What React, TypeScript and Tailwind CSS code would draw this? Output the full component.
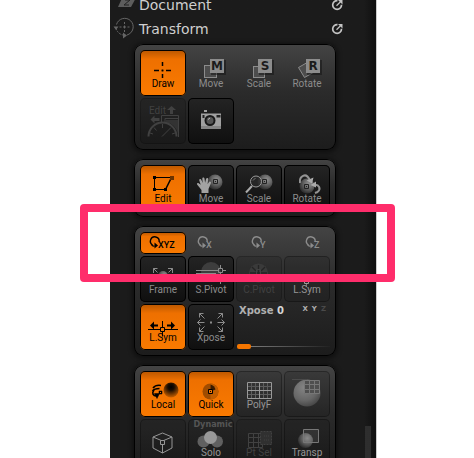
import type { ReactNode } from 'react'
import clsx from 'clsx'

type Variant = 'active' | 'dark' | 'plain' | 'faint' | 'disabled'

const variants: Record<Variant, string> = {
  active:
    'text-black bg-linear-to-b from-[#b85600] via-[#ee7000] via-20% to-[#fa7a00] shadow-[inset_0_0_0_1px_#000]',
  dark: 'text-[#8c8c8c] bg-linear-to-b from-[#242424] to-[#0f0f0f] shadow-[inset_0_0_0_1px_#000]',
  plain: 'text-[#8c8c8c]',
  faint: 'text-[#969696] bg-black/10 shadow-[inset_0_0_0_1px_rgba(0,0,0,0.3)]',
  disabled: 'text-[#414141] bg-black/10 shadow-[inset_0_0_0_1px_rgba(0,0,0,0.2)]',
}

function Tool({ label, name, variant, children }: {
  label?: string
  name?: string
  variant: Variant
  children: ReactNode
}) {
  return (
    <button
      type="button"
      aria-label={name ?? label}
      aria-pressed={variant === 'active'}
      disabled={variant === 'disabled'}
      className={clsx('h-[46px] rounded-[5px] flex flex-col items-center overflow-hidden', variants[variant])}
    >
      <svg width="46" height="27" viewBox="0 0 46 27" className="shrink-0 overflow-visible" fill="none" stroke="currentColor">
        {children}
      </svg>
      {label && <span className="relative text-[10px] leading-[13px] whitespace-nowrap">{label}</span>}
    </button>
  )
}

function AxisTool({ axis, variant, x }: { axis: string; variant: Variant; x: number }) {
  return (
    <button
      type="button"
      aria-label={`Rotate on ${axis}`}
      aria-pressed={variant === 'active'}
      className={clsx('h-[22px] rounded-[5px] flex justify-center overflow-hidden', variants[variant])}
    >
      <svg width="46" height="22" viewBox="0 0 46 22" fill="none" stroke="currentColor">
        <path d={`M${x - 2.5} 13A4.4 4.4 0 1 1 ${x + 4.2} 9.5`} strokeWidth="1.4" />
        <path d={`M${x - 3.5} 12.5q1 2 3 1.5`} strokeWidth="1.3" />
        <path d={`M${x - 0.5} 10.5v6l3.5 -3z`} fill="currentColor" stroke="none" />
        <text x={x + 3} y="16" fontSize="9" fontWeight="500" fill="currentColor" stroke="none">{axis}</text>
      </svg>
    </button>
  )
}

function Panel({ children }: { children: ReactNode }) {
  return (
    <section className="grid grid-cols-4 gap-[2px] p-[6px] rounded-[9px] bg-linear-to-b from-[#444] via-[#2b2b2b] via-45% to-[#1c1c1c] shadow-[inset_0_0_0_1px_#000,0_1px_4px_2px_rgba(0,0,0,0.4)]">
      {children}
    </section>
  )
}

// raised tile with a letter, used by the transform modes
function LetterTile({ letter }: { letter: string }) {
  return (
    <g stroke="none">
      <rect x="23" y="10" width="15" height="15" fill="#111" opacity="0.5" />
      <rect x="22" y="9" width="14" height="14" fill="#8c8c8c" />
      <text x="29" y="20" fontSize="12" fontWeight="700" textAnchor="middle" fill="#1c1c1c" className="font-['DejaVu_Sans',sans-serif]">
        {letter}
      </text>
    </g>
  )
}

function Sphere({ cx, cy, r, fill = 'url(#ball)' }: { cx: number; cy: number; r: number; fill?: string }) {
  return <circle cx={cx} cy={cy} r={r} fill={fill} stroke="none" />
}

function HeaderRow({ title, icon }: { title: string; icon: ReactNode }) {
  return (
    <button type="button" className="h-6 w-full flex items-center pl-[2px] pr-[33px] text-[#cfcfcf]">
      <svg width="24" height="24" viewBox="0 0 24 24" fill="none" stroke="#666">{icon}</svg>
      <span className="pl-[3px] flex-1 text-left text-[14px] leading-[16px] font-['DejaVu_Sans',sans-serif]">{title}</span>
      <svg width="12" height="12" viewBox="0 0 12 12" fill="none" stroke="#c4c4c4">
        <path d="M6.5 1.6a4.4 4.4 0 1 0 4 4.2" strokeWidth="1.7" />
        <path d="M5.5 6.8L9.5 2.8" strokeWidth="1.3" />
        <path d="M7 1h4.500v4.500z" fill="#c4c4c4" stroke="none" />
      </svg>
    </button>
  )
}

export default function App() {
  return (
    <div className="h-screen overflow-hidden bg-white pl-[110px] pr-[97px] font-[Roboto,sans-serif]">
      <svg width="0" height="0" className="absolute" aria-hidden="true">
        <defs>
          <radialGradient id="ball" cx="0.62" cy="0.35" r="0.65">
            <stop offset="0" stopColor="#8e8e8e" />
            <stop offset="0.5" stopColor="#666" />
            <stop offset="1" stopColor="#303030" />
          </radialGradient>
          <radialGradient id="bigBall" cx="0.4" cy="0.3" r="0.8">
            <stop offset="0" stopColor="#858585" />
            <stop offset="0.6" stopColor="#666" />
            <stop offset="1" stopColor="#3c3c3c" />
          </radialGradient>
          <radialGradient id="blackBall" cx="0.5" cy="0.3" r="0.7">
            <stop offset="0" stopColor="#000" />
            <stop offset="0.3" stopColor="#180b00" />
            <stop offset="1" stopColor="#c86000" />
          </radialGradient>
        </defs>
      </svg>

      <aside className="relative h-full bg-[#1b1b1b] border-r border-[#ccc]">
        <div className="h-full overflow-hidden bg-linear-to-l from-[#101010] to-[#1b1b1b] to-[12px]">
          <nav className="-mt-[7px] mb-[3px]">
            <HeaderRow
              title="Document"
              icon={
                <>
                  <path d="M11 3h14l-6 11H6z" fill="#5d5d5d" stroke="none" />
                  <path d="M13 7h5l-6 5h5" stroke="#222" />
                </>
              }
            />
            <HeaderRow
              title="Transform"
              icon={
                <>
                  <path d="M4.500 7.500A8.500 8.500 0 1 1 15 18" />
                  <path d="M4 11a9 9 0 0 0 7 7" strokeDasharray="2 1" />
                  <path d="M1.500 9.500h5l-2.500 3.500zM11 15.500v6l4-3z" fill="#666" stroke="none" />
                  <path d="M12.500 5v2M12.500 8.500v3M12.500 13v2M7.500 10h2M11 10h3M15.500 10h2" />
                </>
              }
            />
          </nav>

          <main className="flex flex-col gap-[9px] pl-[24px] pr-[40px]">
            <Panel>
              <Tool label="Draw" variant="active">
                <path d="M22.500 12v4M22.500 19.500v2M22.500 24v4M14 20.500h5M21.500 20.500h2M26 20.500h5" strokeWidth="1.500" />
              </Tool>
              <Tool label="Move" variant="plain">
                <rect x="16.500" y="15.500" width="12" height="12" fill="#4d4d4d" />
                <LetterTile letter="M" />
              </Tool>
              <Tool label="Scale" variant="plain">
                <rect x="17.500" y="16.500" width="11" height="11" fill="#4d4d4d" />
                <LetterTile letter="S" />
              </Tool>
              <Tool label="Rotate" variant="plain">
                <path d="M14.500 17.500L25 11.500L31 21.500L20.500 27.500z" fill="#4d4d4d" />
                <LetterTile letter="R" />
              </Tool>
              <Tool name="Edit gauge" variant="disabled">
                <text x="9" y="16" fontSize="10" fill="currentColor" stroke="none">Edit</text>
                <path d="M31.500 8l4.500 4h-3v4h-3v-4h-3zM10.500 21.500l4-4v2.500h5v3h-5v2.500z" fill="currentColor" stroke="none" />
                <path d="M21.500 24v-6.500h17V39M25 24v-3.500h13" />
                <path d="M26 22h12v14a16 16 0 0 0-12-12z" fill="#333" stroke="none" />
                <path d="M8.500 38.500a14 14 0 0 1 28 0" strokeWidth="2" />
                <path d="M22.500 26v4M14 29.500l2.500 3M31 29.500l-9 9M10 35l3 1M35 35l-3 1" />
              </Tool>
              <Tool name="Snapshot" variant="dark">
                <path d="M13 15.500h20V31H13zM16 12h3v2h-3z" fill="#a0a0a0" stroke="none" />
                <path d="M13 28h20v3H13z" fill="#858585" stroke="none" />
                <circle cx="22" cy="22.500" r="4.500" fill="#555" stroke="#181818" strokeWidth="2" />
                <path d="M20 21.500l2-1.500" stroke="#bbb" />
                <path d="M28.500 17h4v2.500h-4zM14.500 17h2v3h-2z" fill="#222" stroke="none" />
              </Tool>
            </Panel>

            <Panel>
              <Tool label="Edit" variant="active">
                <path d="M14.500 12.500h17M14.500 12.500v12M14.500 24.500h11" />
                <path d="M25.500 24.500l6-12" strokeWidth="1.600" />
                <path d="M13 11h3v3h-3zM13 23h3v3h-3zM24 23h3v3h-3z" fill="#000" stroke="none" />
                <rect x="30" y="11" width="4" height="4" fill="#6b3300" stroke="none" />
              </Tool>
              <Tool label="Move" variant="dark">
                <Sphere cx={27} cy={17} r={7.500} />
                <path d="M25.500 14.500h4v4h-4z" stroke="#222" />
                <path d="M27 16h1v1h-1z" fill="#222" stroke="none" />
                <path d="M13.500 28v-3l-4-5c-1.500-1.500 0-2.800 1.500-1.600l1.700 1.300-1.500-4.500c0-1.500 1.800-1.700 2.200-.3l1.300 3-.4-4.300c0-1.500 2.100-1.500 2.200 0l.6 4.200 1-4c.5-1.200 2.200-.9 2.100.4l-.6 4.800 1.500-2c1-1 2.400 0 1.800 1.200L20.500 24v4z" fill="#a2a2a2" stroke="none" />
              </Tool>
              <Tool label="Scale" variant="dark">
                <Sphere cx={29} cy={17} r={7.500} />
                <path d="M26.500 14.500h4v4h-4z" stroke="#222" />
                <path d="M28 16h1v1h-1z" fill="#222" stroke="none" />
                <circle cx="20" cy="16.500" r="5.500" fill="#2b2b2b" fillOpacity="0.7" stroke="#999" />
                <path d="M17 15.500l2.500-2.500" stroke="#777" />
                <path d="M16 21l-6 6.500" stroke="#aaa" strokeWidth="2" />
              </Tool>
              <Tool label="Rotate" variant="dark">
                <Sphere cx={23} cy={21} r={7.500} />
                <path d="M20.500 19.500h4v4h-4z" stroke="#222" />
                <path d="M22 21h1v1h-1z" fill="#222" stroke="none" />
                <path d="M16 18c-1-7 6-11 9.500-3.500M30 20c5-1 7.500 4 3.500 7l-2.500 1" strokeWidth="2" stroke="#939393" />
                <path d="M22.500 15.500l7-3-1.500 6zM26.500 20l5.500-3.500v6z" fill="#aaa" stroke="none" />
              </Tool>
            </Panel>

            <Panel>
              <AxisTool axis="XYZ" variant="active" x={15} />
              <AxisTool axis="X" variant="plain" x={15} />
              <AxisTool axis="Y" variant="plain" x={21} />
              <AxisTool axis="Z" variant="plain" x={27} />
              <Tool label="Frame" variant="dark">
                <path d="M13.500 17v-4.500h4M13.500 12.500l4 4M28 12.500h4.500V17M32.500 12.500l-4 4" />
                <Sphere cx={23} cy={20} r={5} />
              </Tool>
              <Tool label="S.Pivot" variant="dark">
                <path d="M13 16a10 10 0 0 1 20 0a10 10 0 0 1-20 0z" fill="#3d3d3d" stroke="none" />
                <path d="M8 14.500h22M34 14.500h4M32.500 9v4M32.500 16v12M8 17.500h20" />
                <path d="M30.500 12.500h4v4h-4z" />
              </Tool>
              <Tool label="C.Pivot" variant="disabled">
                <circle cx="22.500" cy="17" r="9.500" fill="#3a3a3a" stroke="none" />
                <path d="M22.500 9v16M14 17h17M16 11l4 4M29 11l-4 4" stroke="#242424" strokeWidth="1.300" />
                <path d="M20.500 13.500h4v6h-4z" />
              </Tool>
              <Tool label="L.Sym" variant="faint">
                <path d="M8 25.500h13M24 25.500h14M22.500 20v4M22.500 27v4" stroke="#777" />
                <path d="M20.500 23.500h4v4h-4z" stroke="#999" />
              </Tool>
              <Tool label="L.Sym" variant="active">
                <path d="M8 25.500h12.500M24.500 25.500h13.500M22.500 17v6M22.500 27.500v5M20.500 23.500h4v4h-4z" />
                <path d="M10 21.500l4-4v3h4v2h-4v3zM35 21.500l-4-4v3h-4v2h4v3z" fill="#000" stroke="none" />
              </Tool>
              <Tool label="Xpose" variant="dark">
                <path d="M22 18.500h2" strokeWidth="2" />
                <path d="M16.500 14.500l-5-5M11.500 13.500v-4h4M29.500 14.500l5-5M30.500 9.500h4v4M16.500 18.500h-7M12.500 15.500l-3 3 3 3M29.500 18.500h7M33.500 15.500l3 3-3 3M16.500 22.500l-5 5M11.500 23.500v4h4M29.500 22.500l5 5M30.500 27.500h4v-4" />
              </Tool>
              <div className="col-span-2 h-[46px] flex flex-col justify-between pl-[1px] font-['DejaVu_Sans',sans-serif] font-bold text-[#b0b0b0]">
                <div className="flex justify-between pl-[2px] pr-1 pt-px">
                  <label htmlFor="xpose" className="text-[10px] leading-[12px]">
                    Xpose <span className="text-[#d4d4d4]">0</span>
                  </label>
                  <span className="flex gap-1 text-[7px] leading-[8px]">
                    <span>X</span>
                    <span>Y</span>
                    <span className="text-[#4a4a4a]">Z</span>
                  </span>
                </div>
                <input
                  id="xpose"
                  type="range"
                  min={0}
                  max={100}
                  defaultValue={0}
                  className="appearance-none w-full h-[7px] bg-[linear-gradient(to_right,#8a8a8a,#222)] bg-[length:100%_1px] bg-center bg-no-repeat [&::-webkit-slider-thumb]:appearance-none [&::-webkit-slider-thumb]:w-[14px] [&::-webkit-slider-thumb]:h-[5px] [&::-webkit-slider-thumb]:rounded-[2px] [&::-webkit-slider-thumb]:bg-[#f57600]"
                />
              </div>
            </Panel>

            <Panel>
              <Tool label="Local" variant="active">
                <Sphere cx={31} cy={19} r={7.500} fill="url(#blackBall)" />
                <path d="M13 17c2-2.500 5-3 8-2.500M12.500 20c1.500-2 4-2.500 7-2.500M14 19c-2.500 3-1 6 2.500 6" strokeWidth="1.600" />
                <path d="M14.500 22.500h5l-2.500 5zM19 20h3v3h-3z" fill="#000" stroke="#000" strokeWidth="0.500" />
                <path d="M20 21h1v1h-1z" fill="#f47500" stroke="none" />
              </Tool>
              <Tool label="Quick" variant="active">
                <circle cx="22.500" cy="20.500" r="8" fill="#a04c00" stroke="none" />
                <path d="M22.500 12.500a8 8 0 0 1 0 16z" fill="#c25e00" stroke="none" />
                <path d="M22.500 13.500a7 7 0 0 1 5 5l-5 2z" fill="#3a1b00" stroke="none" />
                <path d="M20.500 18.500h4v4h-4z" fill="#f47500" />
                <path d="M22 20h1v1h-1z" fill="#000" stroke="none" />
              </Tool>
              <Tool label="PolyF" variant="faint">
                <path d="M11.500 15.500h24M11.500 23.500h24M15.500 11.500v16M19.500 11.500v16M27.500 11.500v16M31.500 11.500v16" stroke="#5e5e5e" />
                <path d="M11.500 11.500h24v16h-24zM23.500 11.500v16M11.500 19.500h24" stroke="#999" />
              </Tool>
              <Tool name="Smooth" variant="faint">
                <Sphere cx={23} cy={22} r={13.500} fill="url(#bigBall)" />
                <path d="M8 8.500h15" stroke="#4a4a4a" />
                <path d="M20.500 9.500h15v13h-15z" fill="#4f4f4f" stroke="#777" />
                <path d="M20.500 13.500h15M20.500 18.500h15M25.500 9.500v13M30.500 9.500v13" stroke="#777" />
              </Tool>
              <Tool name="Box" variant="faint">
                <path d="M22.500 14l9.500 4v11l-9.500 5-9.500-5V18zM13 18l9.500 4 9.500-4M22.500 26v8" />
                <path d="M20.500 21.500h4v4h-4z" fill="#222" />
              </Tool>
              <Tool label="Solo" name="Dynamic Solo" variant="faint">
                <text x="25" y="8" fontSize="9" fontWeight="700" textAnchor="middle" fill="#555" stroke="none" className="font-['DejaVu_Sans_Condensed','DejaVu_Sans',sans-serif]">Dynamic</text>
                <Sphere cx={15.500} cy={22.500} r={6} fill="#606060" />
                <Sphere cx={29} cy={22.500} r={6} fill="#606060" />
                <Sphere cx={22.500} cy={18.500} r={6.500} fill="#989898" />
              </Tool>
              <Tool label="Pt Sel" variant="disabled">
                <path d="M12.500 14.500h14v14h-14zM12.500 18.500h14M12.500 23.500h14M17.500 14.500v14M22.500 14.500v14" />
                <rect x="24.500" y="12.500" width="11" height="13" fill="#303030" strokeDasharray="2 1" />
                <path d="M28 17h5M28 21h5" strokeDasharray="1 1" />
              </Tool>
              <Tool label="Transp" variant="faint">
                <Sphere cx={21.500} cy={21.500} r={7.500} />
                <path d="M19.500 10.500h15v13h-15z" fill="#777" fillOpacity="0.2" stroke="#777" />
              </Tool>
            </Panel>
          </main>
        </div>

        {/* scroll thumb along the tray edge */}
        <div className="absolute right-[5px] bottom-0 w-[6px] h-8 bg-[#1e1e1e] bg-[radial-gradient(#3a3a3a_0.5px,transparent_1px)] bg-[length:2px_2px]" />

        {/* callout round the axis row */}
        <div className="absolute -left-[30px] -right-[19px] top-[204px] h-[78px] border-8 border-[#ff2d6b] rounded-[4px] pointer-events-none" />
      </aside>
    </div>
  )
}
